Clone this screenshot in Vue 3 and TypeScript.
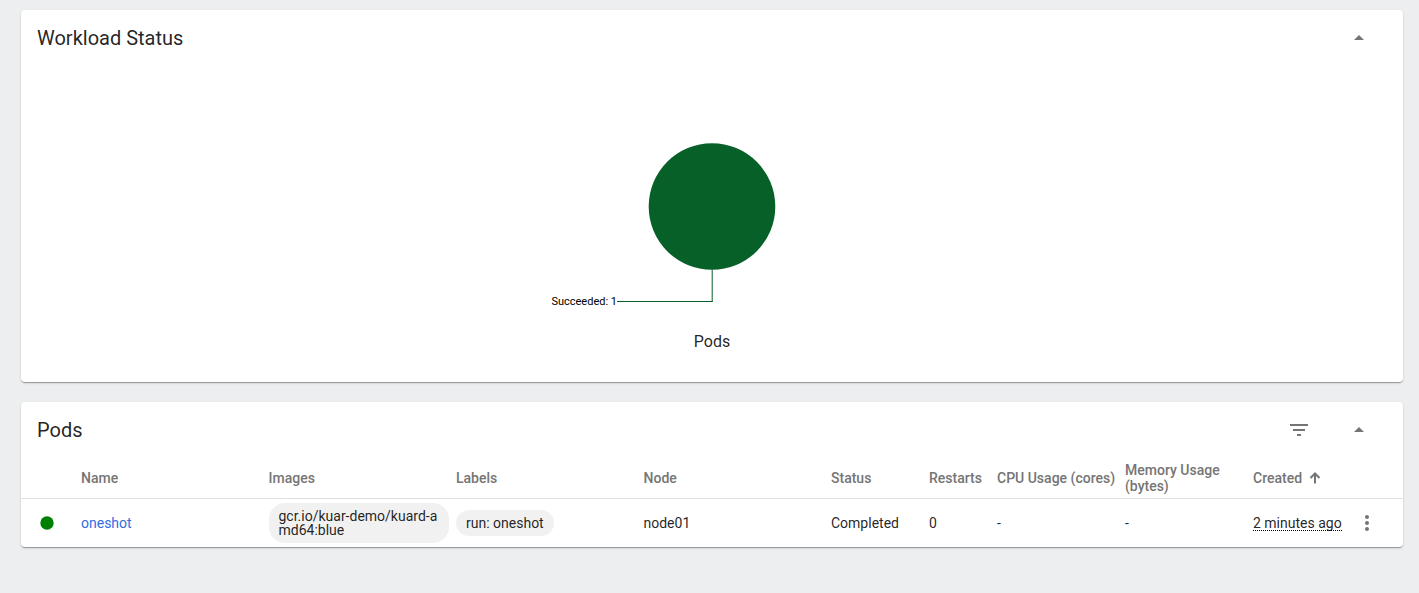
<script setup lang="ts">
import { ref } from 'vue'

interface Column {
  key: string
  label: string
}

interface Pod {
  name: string
  image: string
  label: string
  node: string
  status: string
  restarts: number
  cpu: string
  memory: string
  created: string
}

const columns: Column[] = [
  { key: 'name', label: 'Name' },
  { key: 'images', label: 'Images' },
  { key: 'labels', label: 'Labels' },
  { key: 'node', label: 'Node' },
  { key: 'status', label: 'Status' },
  { key: 'restarts', label: 'Restarts' },
  { key: 'cpu', label: 'CPU Usage (cores)' },
  { key: 'memory', label: 'Memory Usage (bytes)' },
]

const pods: Pod[] = [
  {
    name: 'oneshot',
    image: 'gcr.io/kuar-demo/kuard-amd64:blue',
    label: 'run: oneshot',
    node: 'node01',
    status: 'Completed',
    restarts: 0,
    cpu: '-',
    memory: '-',
    created: '2 minutes ago',
  },
]

const statusOpen = ref(true)
const podsOpen = ref(true)
</script>

<template>
  <main class="page">
    <section class="card">
      <header class="card-header">
        <h2 class="title">Workload Status</h2>
        <button
          class="icon-button"
          type="button"
          aria-label="Toggle workload status"
          :aria-expanded="statusOpen"
          @click="statusOpen = !statusOpen"
        >
          <svg viewBox="0 0 24 24" width="24" height="24"><path d="M7 14l5-5 5 5z" /></svg>
        </button>
      </header>
      <figure v-if="statusOpen" class="chart">
        <svg class="pie" viewBox="0 0 400 180" width="400" height="180" role="img" aria-label="Succeeded: 1">
          <circle cx="200" cy="66.5" r="63.3" />
          <path class="leader-drop" d="M200.2 129.500V162" />
          <path class="leader" d="M200.700 161.500H105" />
          <text x="105" y="165" text-anchor="end">Succeeded: 1</text>
        </svg>
        <figcaption class="caption">Pods</figcaption>
      </figure>
    </section>

    <section class="card">
      <header class="card-header">
        <h2 class="title">Pods</h2>
        <button class="icon-button" type="button" aria-label="Filter">
          <svg viewBox="0 0 24 24" width="24" height="24">
            <path d="M10 18h4v-2h-4v2zM3 6v2h18V6H3zm3 7h12v-2H6v2z" />
          </svg>
        </button>
        <button
          class="icon-button"
          type="button"
          aria-label="Toggle pods"
          :aria-expanded="podsOpen"
          @click="podsOpen = !podsOpen"
        >
          <svg viewBox="0 0 24 24" width="24" height="24"><path d="M7 14l5-5 5 5z" /></svg>
        </button>
      </header>
      <table v-if="podsOpen" class="table">
        <colgroup>
          <col class="col-icon" />
          <col v-for="c in columns" :key="c.key" :class="'col-' + c.key" />
          <col class="col-created" />
          <col class="col-menu" />
        </colgroup>
        <thead>
          <tr>
            <th></th>
            <th v-for="c in columns" :key="c.key" scope="col">{{ c.label }}</th>
            <th scope="col" aria-sort="ascending">
              <button class="sort" type="button">
                Created
                <svg viewBox="0 0 12 12" width="12" height="12">
                  <path d="M6 11.5V1.5M1.5 6L6 1.5L10.5 6" />
                </svg>
              </button>
            </th>
            <th></th>
          </tr>
        </thead>
        <tbody>
          <tr v-for="pod in pods" :key="pod.name">
            <td class="state">
              <svg viewBox="0 0 20 20" width="20" height="20"><circle cx="10" cy="10" r="6.7" /></svg>
            </td>
            <td><a class="link" href="#">{{ pod.name }}</a></td>
            <td><span class="chip">{{ pod.image }}</span></td>
            <td><span class="chip">{{ pod.label }}</span></td>
            <td>{{ pod.node }}</td>
            <td>{{ pod.status }}</td>
            <td>{{ pod.restarts }}</td>
            <td>{{ pod.cpu }}</td>
            <td>{{ pod.memory }}</td>
            <td><span class="date">{{ pod.created }}</span></td>
            <td class="menu">
              <button class="menu-button" type="button" aria-label="Actions">
                <svg viewBox="0 0 24 24" width="24" height="24">
                  <path d="M12 8c1.100 0 2-.9 2-2s-.9-2-2-2-2 .9-2 2 .9 2 2 2zm0 2c-1.100 0-2 .9-2 2s.9 2 2 2 2-.9 2-2-.9-2-2-2zm0 6c-1.100 0-2 .9-2 2s.9 2 2 2 2-.9 2-2-.9-2-2-2z" />
                </svg>
              </button>
            </td>
          </tr>
        </tbody>
      </table>
    </section>
  </main>
</template>

<style>
html {
  background: #eceef0;
}

body {
  margin: 0;
}
</style>

<style scoped>
.page {
  display: flex;
  flex-direction: column;
  gap: 20px;
  padding: 10px 16px 20px 21px;
  color: rgba(0, 0, 0, 0.87);
  font-family: Roboto, "Liberation Sans", sans-serif;
  font-size: 14px;
}

.card {
  background: #fff;
  border-radius: 4px;
  box-shadow: 0 2px 1px -1px rgba(0, 0, 0, 0.2), 0 1px 1px rgba(0, 0, 0, 0.14), 0 1px 3px rgba(0, 0, 0, 0.12);
}

.card-header {
  display: flex;
  align-items: center;
  gap: 20px;
  height: 56px;
  padding: 0 24px 0 16px;
}

.title {
  flex: 1;
  margin: 0;
  font-size: 20px;
  font-weight: 400;
  line-height: 24px;
}

button {
  border: 0;
  padding: 0;
  background: none;
  color: inherit;
  font: inherit;
  cursor: pointer;
}

button svg {
  display: block;
}

.icon-button {
  display: flex;
  align-items: center;
  justify-content: center;
  width: 40px;
  height: 40px;
}

.icon-button path,
.menu-button path {
  fill: #757575;
}

.chart {
  display: flex;
  flex-direction: column;
  align-items: center;
  margin: 0;
  padding: 74px 0 28px;
}

.pie circle {
  fill: #066028;
}

.leader,
.leader-drop {
  fill: none;
  stroke: #066028;
  stroke-width: 1;
}

.pie text {
  fill: #000;
  font-size: 11px;
}

.caption {
  padding-top: 10px;
  font-size: 16px;
  line-height: 24px;
}

.table {
  width: 100%;
  table-layout: fixed;
  border-collapse: collapse;
}

.col-icon {
  width: 60px;
}

.col-status {
  width: 98px;
}

.col-restarts {
  width: 68px;
}

.col-cpu,
.col-memory {
  width: 128px;
}

.col-created {
  width: 98px;
}

.col-menu {
  width: 52px;
}

th,
td {
  padding: 0 7px 0 0;
  text-align: left;
  vertical-align: middle;
}

th {
  height: 40px;
  border-bottom: 1px solid #e0e0e0;
  color: #757575;
  font-weight: 500;
  line-height: 16px;
}

td {
  height: 48px;
  line-height: 20px;
}

.sort {
  display: flex;
  align-items: center;
  gap: 7px;
}

.sort path {
  fill: none;
  stroke: #757575;
  stroke-width: 2;
}

.state {
  padding-left: 16px;
}

.state svg {
  display: block;
}

.state circle {
  fill: #008000;
}

.link {
  color: #326de6;
  text-decoration: none;
}

.chip {
  display: inline-block;
  box-sizing: border-box;
  max-width: 100%;
  padding: 6px 10px;
  border-radius: 16px;
  background: #f1f1f1;
  line-height: 14px;
  vertical-align: middle;
  word-break: break-all;
}

.date {
  display: inline-block;
  border-bottom: 1px dotted #000;
  line-height: 14px;
}

.menu {
  padding: 0;
}

.menu-button {
  display: block;
  width: 24px;
  margin: 0 0 0 4px;
}
</style>
